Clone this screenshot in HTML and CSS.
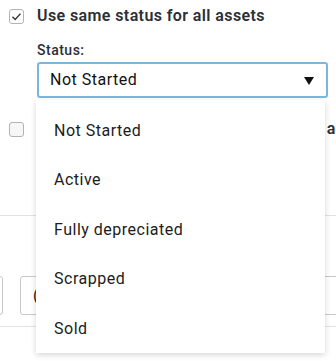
FILE: index.html
```html
<!DOCTYPE html>
<html lang="en">
<head>
  <meta charset="UTF-8">
  <meta name="viewport" content="width=device-width, initial-scale=1.0">
  <title>Asset status</title>
  <link rel="stylesheet" href="styles.css">
</head>
<body>
  <div class="page">
    <div class="panel">
      <label class="check-row">
        <span class="checkbox checked">
          <svg width="11" height="11" viewBox="0 0 11 11"><polyline points="1.5,5.8 4.2,8.4 9.5,2.6" fill="none" stroke="#333" stroke-width="1.4"/></svg>
        </span>
        <span class="check-label">Use same status for all assets</span>
      </label>

      <div class="field">
        <div class="field-label">Status:</div>
        <div class="select-wrap">
          <div class="select">
            <span>Not Started</span>
            <svg class="arrow" width="10" height="8" viewBox="0 0 10 8"><polygon points="0,0 10,0 5,8" fill="#111"/></svg>
          </div>
          <ul class="menu">
            <li>Not Started</li>
            <li>Active</li>
            <li>Fully depreciated</li>
            <li>Scrapped</li>
            <li>Sold</li>
          </ul>
        </div>
      </div>

      <label class="check-row second">
        <span class="checkbox"></span>
        <span class="check-label wide-label">Use same depreciation start date for all assets</span>
      </label>
    </div>

    <div class="divider top-divider"></div>

    <div class="inputs">
      <div class="input narrow"></div>
      <div class="input wide">(GMT+01:00) Europe</div>
    </div>

    <div class="divider"></div>
  </div>
</body>
</html>
```

FILE: styles.css
```css
/* Base */
body {
  margin: 0;
  background: #fff;
  font-family: Roboto, "Liberation Sans", sans-serif;
  color: #222;
}

.page {
  height: 100vh;
  overflow: hidden;
}

.panel {
  padding: 6px 0 0 9px;
}

/* Checkbox rows */
.check-row {
  display: flex;
  align-items: center;
  gap: 13px;
  height: 20px;
  white-space: nowrap;
}

.check-row.second {
  margin-top: 21px;
}

.checkbox {
  width: 13px;
  height: 13px;
  flex: none;
  border: 1px solid #b3b3b3;
  border-radius: 3px;
  background: #f7f7f7;
  display: flex;
  align-items: center;
  justify-content: center;
}

.checkbox.checked {
  background: #fff;
}

.check-label {
  font-size: 16px;
  font-weight: 600;
  line-height: 20px;
  color: #2b3036;
  letter-spacing: 0.4px;
}

.wide-label {
  letter-spacing: 0.65px;
}

/* Status field */
.field {
  margin: 16px 0 0 28px;
}

.field-label {
  font-size: 14px;
  font-weight: 500;
  line-height: 17px;
  letter-spacing: 0.5px;
  color: #2b3036;
  margin-bottom: 3px;
}

.select-wrap {
  position: relative;
  width: 291px;
}

.select {
  height: 32px;
  border: 2px solid #7db6dd;
  border-radius: 3px;
  padding: 0 12px 0 11px;
  display: flex;
  align-items: center;
  justify-content: space-between;
  font-size: 16px;
  line-height: 32px;
  letter-spacing: 0.5px;
  color: #111;
}

.arrow {
  margin-top: 1px;
}

/* Dropdown menu */
.menu {
  position: absolute;
  top: calc(100% + 2px);
  left: -1px;
  width: 289px;
  margin: 0;
  padding: 5.5px 0 0;
  list-style: none;
  background: #fff;
  box-shadow: 0 2px 6px rgba(0, 0, 0, 0.16);
  z-index: 2;
}

.menu li {
  height: 49.5px;
  line-height: 49.5px;
  padding-left: 18px;
  font-size: 16px;
  letter-spacing: 0.5px;
  color: #1c1c1c;
}

/* Background rows */
.divider {
  height: 1px;
  background: #e2e2e2;
}

.top-divider {
  margin-top: 76px;
}

.inputs {
  display: flex;
  gap: 17px;
  margin: 60px 0 11px;
}

.input {
  height: 37px;
  border: 1px solid #c9c9c9;
  border-radius: 3px;
  font-size: 16px;
  line-height: 37px;
  white-space: nowrap;
}

.input.narrow {
  width: 40px;
  margin-left: -39px;
}

.input.wide {
  flex: 1;
  margin-right: -20px;
  padding-left: 12px;
  color: #222;
}
```
